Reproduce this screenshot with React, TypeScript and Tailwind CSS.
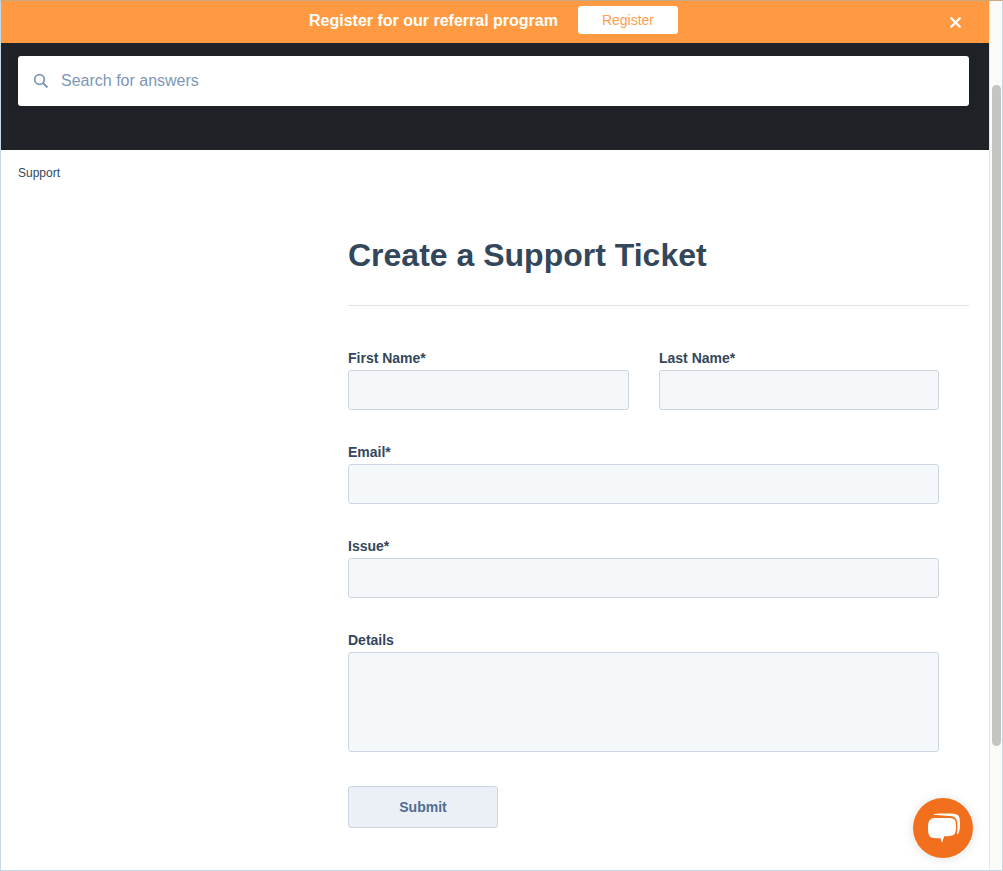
import React from "react";
import { X } from "lucide-react";

function Field({ label, className = "" }: { label: string; className?: string }) {
  return (
    <div className={className}>
      <label className="block text-[14px] leading-[20px] font-bold text-[#33475b] mb-[2px]">{label}</label>
      <div className="h-[40px] rounded-[3px] border border-[#cbd6e2] bg-[#f5f8fa]" />
    </div>
  );
}

export default function App() {
  return (
    <div className="relative w-[1003px] h-[871px] overflow-hidden flex bg-white border-x border-b border-[#c5d9e4] border-t border-t-[#c9a77f] font-['Liberation_Sans',Arial,sans-serif]">
      <main className="w-[988px] shrink-0 flex flex-col">
        <div className="h-[42px] shrink-0 bg-[#ff9a42] flex items-center relative pb-[4px]">
          <div className="ml-[308px] flex items-center">
            <span className="text-white font-bold text-[16px] leading-[20px] mt-[2px]">Register for our referral program</span>
            <button className="ml-[20px] w-[100px] h-[28px] rounded-[3px] bg-white text-[#ff9e4d] text-[14px]">Register</button>
          </div>
          <X className="absolute left-[946px] top-[12.500px] text-white" size={17} strokeWidth={3.400} />
        </div>
        <div className="h-[107px] shrink-0 bg-[#1f2328] pl-[17px] pt-[13px] pr-[20px]">
          <div className="h-[50px] rounded-[3px] bg-white flex items-center pl-[15px] shadow-[0_0_8px_rgba(0,0,0,0.1)]">
            <svg width="16" height="16" viewBox="0 0 16 16" fill="none" stroke="#7c98b6" strokeWidth="1.800">
              <circle cx="6.500" cy="6.500" r="4.800" />
              <path d="M10 10l4.500 4.500" strokeWidth="2" />
            </svg>
            <span className="ml-[12px] text-[16px] text-[#7c98b6]">Search for answers</span>
          </div>
        </div>
        <div className="pl-[17px] pt-[15px] text-[12px] leading-[16px] text-[#33475b]">Support</div>
        <div className="ml-[347px] w-[621px] mt-[54px]">
          <h1 className="text-[32px] leading-[40px] font-bold text-[#33475b]">Create a Support Ticket</h1>
          <div className="mt-[30px] border-t border-[#dfe3eb]" />
          <div className="mt-[42px] w-[591px] flex flex-col gap-[32px]">
            <div className="flex gap-[30px]">
              <Field label="First Name*" className="w-[281px]" />
              <Field label="Last Name*" className="w-[280px]" />
            </div>
            <Field label="Email*" />
            <Field label="Issue*" />
            <div>
              <label className="block text-[14px] leading-[20px] font-bold text-[#33475b] mb-[2px]">Details</label>
              <div className="h-[100px] rounded-[3px] border border-[#cbd6e2] bg-[#f5f8fa]" />
            </div>
            <button className="mt-[2px] w-[150px] h-[42px] rounded-[3px] border border-[#cbd6e2] bg-[#eaf0f6] text-[#506e91] text-[14px] font-bold">Submit</button>
          </div>
        </div>
      </main>
      <div className="flex-1 bg-[#fafafa] border-l border-[#e8e8e8] pl-[2px] pr-[1px]">
        <div className="mt-[84px] h-[661px] rounded-[5px] bg-[#c4c4c4]" />
      </div>
      <div className="absolute left-[912px] top-[797px] w-[60px] h-[60px] rounded-full bg-[#f26f1d] shadow-[0_1px_12px_rgba(0,0,0,0.12)] flex items-center justify-center">
        <svg width="34" height="30" viewBox="0 0 34 30" fill="none">
          <path d="M7 1.800C9 .8 12 .6 17 .6h6c5 0 8 .4 9.300 2 1.400 1.800 1.700 4.500 1.700 8.500 0 3.600-.3 6.500-1.200 8.500-.4.9-1 1.500-1.800 1.800.3-2.500.4-5 .4-8 0-4-.4-6.800-2-8.400C28 3.400 25 2.900 20 2.800L7 1.800Z" fill="#fff" />
          <path d="M10 5h11c4 0 6.500.4 7.700 1.800 1.100 1.300 1.300 3.700 1.300 7 0 3.400-.3 5.800-1.400 7.300-1.200 1.500-3.500 2-7.100 2.100h-3.300L16 30 14.500 25.200H10c-3.500-.1-5.600-.7-6.600-2.200C2.300 21.500 2 18.800 2 14.800c0-3.600.4-6 1.500-7.400C4.700 5.500 6.800 5 10 5Z" fill="#fff" />
        </svg>
      </div>
    </div>
  );
}
